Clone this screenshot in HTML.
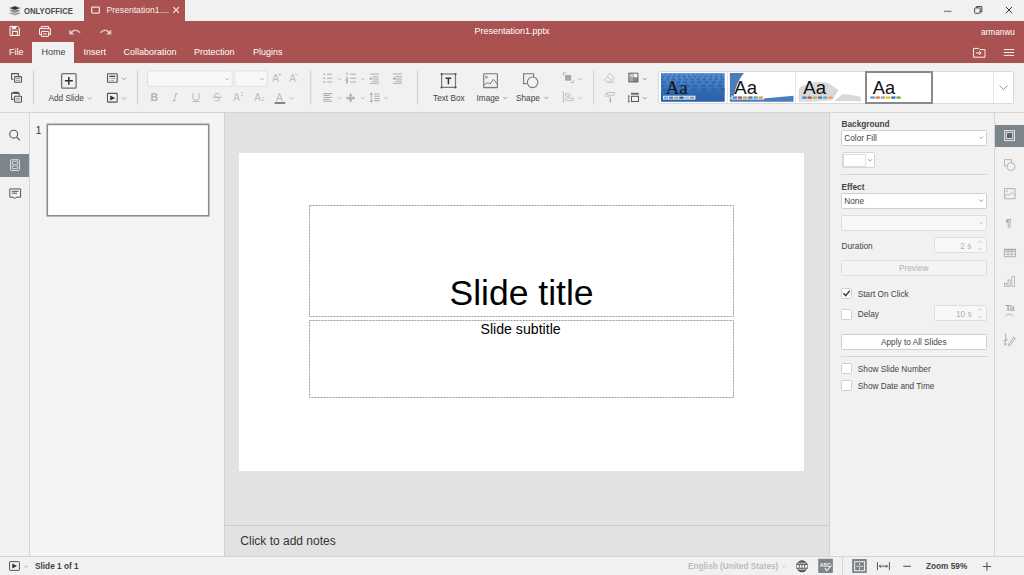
<!DOCTYPE html>
<html><head><meta charset="utf-8">
<style>
*{box-sizing:border-box;margin:0;padding:0}
html,body{width:1024px;height:575px;overflow:hidden;-webkit-font-smoothing:antialiased;background:#f1f1f1;font-family:"Liberation Sans",sans-serif;color:#444}
.a{position:absolute}
.t{position:absolute;white-space:nowrap;line-height:1}
svg{position:absolute;overflow:visible}
</style></head><body>
<!-- title bar -->
<div class="a" style="left:0;top:0;width:1024px;height:21px;background:#f1f1f1"></div>
<div class="a" style="left:84px;top:0;width:101px;height:21px;background:#aa5252"></div>
<div class="t" style="left:23.8px;top:5.5px;font-size:9.4px;font-weight:bold;color:#4a4a4a;transform:scaleX(0.82);transform-origin:0 0">ONLYOFFICE</div>
<div class="t" style="left:106.5px;top:5.5px;font-size:8.6px;color:#fff;opacity:0.92">Presentation1....</div>
<!-- header -->
<div class="a" style="left:0;top:21px;width:1024px;height:42px;background:#aa5252"></div>
<div class="a" style="left:32px;top:42px;width:42px;height:21px;background:#f1f1f1"></div>
<div class="t" style="left:474.5px;top:27px;font-size:9px;color:#fff">Presentation1.pptx</div>
<div class="t" style="left:981px;top:28.5px;font-size:8.25px;color:#fff">armanwu</div>
<div class="t" style="left:9px;top:48px;font-size:9px;color:#fff">File</div>
<div class="t" style="left:41.5px;top:48px;font-size:9px;color:#444">Home</div>
<div class="t" style="left:83.5px;top:48px;font-size:9px;color:#fff">Insert</div>
<div class="t" style="left:123.5px;top:48px;font-size:9px;color:#fff">Collaboration</div>
<div class="t" style="left:194px;top:48px;font-size:9px;color:#fff">Protection</div>
<div class="t" style="left:253px;top:48px;font-size:9px;color:#fff">Plugins</div>
<!-- toolbar -->
<div class="a" style="left:0;top:112px;width:1024px;height:1px;background:#d5d5d5"></div>
<div class="t" style="left:48.5px;top:95px;font-size:8.25px;color:#444">Add Slide</div>
<div class="t" style="left:433px;top:95px;font-size:8.25px;color:#444">Text Box</div>
<div class="t" style="left:476.5px;top:95px;font-size:8.25px;color:#444">Image</div>
<div class="t" style="left:516px;top:95px;font-size:8.25px;color:#444">Shape</div>
<!-- gallery -->
<div class="a" style="left:658.3px;top:70.6px;width:356px;height:33.6px;background:#fff;border:1px solid #dadada;border-radius:1.5px"></div>
<div class="a" style="left:726.5px;top:71.6px;width:1px;height:31.6px;background:#e6e6e6"></div>
<div class="a" style="left:795.3px;top:71.6px;width:1px;height:31.6px;background:#e6e6e6"></div>
<div class="a" style="left:992.5px;top:71.6px;width:1px;height:31.6px;background:#e6e6e6"></div>
<div class="a" style="left:865.1px;top:71.1px;width:68.4px;height:32.5px;border:2px solid #8a8a8a"></div>
<svg width="1024" height="575" style="left:0;top:0" viewBox="0 0 1024 575">
<defs>
<linearGradient id="g1" x1="0" y1="0" x2="0" y2="1">
<stop offset="0" stop-color="#5a90d2"/><stop offset="0.45" stop-color="#4079c0"/><stop offset="0.7" stop-color="#2f68ad"/><stop offset="1" stop-color="#2560a6"/>
</linearGradient>
<pattern id="dots" x="661" y="73" width="5.2" height="4" patternUnits="userSpaceOnUse">
<ellipse cx="2.6" cy="2" rx="1.6" ry="0.9" fill="#2a5c9e" fill-opacity="0.55"/>
</pattern>
</defs>
<rect x="661" y="73.1" width="63.7" height="28.65" fill="url(#g1)"/>
<clipPath id="c1"><rect x="661" y="73.1" width="63.7" height="28.65"/></clipPath><g clip-path="url(#c1)" fill="#2a62ab" fill-opacity="0.75"><ellipse cx="661.0" cy="74.8" rx="1.4" ry="0.6"/><ellipse cx="665.6" cy="74.8" rx="1.4" ry="0.6"/><ellipse cx="670.2" cy="74.8" rx="1.4" ry="0.6"/><ellipse cx="674.8" cy="74.8" rx="1.4" ry="0.6"/><ellipse cx="679.4" cy="74.8" rx="1.4" ry="0.6"/><ellipse cx="684.0" cy="74.8" rx="1.4" ry="0.6"/><ellipse cx="688.6" cy="74.8" rx="1.4" ry="0.6"/><ellipse cx="693.2" cy="74.8" rx="1.4" ry="0.6"/><ellipse cx="697.8" cy="74.8" rx="1.4" ry="0.6"/><ellipse cx="702.4" cy="74.8" rx="1.4" ry="0.6"/><ellipse cx="707.0" cy="74.8" rx="1.4" ry="0.6"/><ellipse cx="711.6" cy="74.8" rx="1.4" ry="0.6"/><ellipse cx="716.2" cy="74.8" rx="1.4" ry="0.6"/><ellipse cx="720.8" cy="74.8" rx="1.4" ry="0.6"/><ellipse cx="663.0" cy="76.9" rx="1.7" ry="0.8"/><ellipse cx="668.3" cy="76.9" rx="1.7" ry="0.8"/><ellipse cx="673.6" cy="76.9" rx="1.7" ry="0.8"/><ellipse cx="678.9" cy="76.9" rx="1.7" ry="0.8"/><ellipse cx="684.2" cy="76.9" rx="1.7" ry="0.8"/><ellipse cx="689.5" cy="76.9" rx="1.7" ry="0.8"/><ellipse cx="694.8" cy="76.9" rx="1.7" ry="0.8"/><ellipse cx="700.1" cy="76.9" rx="1.7" ry="0.8"/><ellipse cx="705.4" cy="76.9" rx="1.7" ry="0.8"/><ellipse cx="710.7" cy="76.9" rx="1.7" ry="0.8"/><ellipse cx="716.0" cy="76.9" rx="1.7" ry="0.8"/><ellipse cx="721.3" cy="76.9" rx="1.7" ry="0.8"/><ellipse cx="661.5" cy="79.4" rx="2.0" ry="0.9"/><ellipse cx="667.6" cy="79.4" rx="2.0" ry="0.9"/><ellipse cx="673.7" cy="79.4" rx="2.0" ry="0.9"/><ellipse cx="679.8" cy="79.4" rx="2.0" ry="0.9"/><ellipse cx="685.9" cy="79.4" rx="2.0" ry="0.9"/><ellipse cx="692.0" cy="79.4" rx="2.0" ry="0.9"/><ellipse cx="698.1" cy="79.4" rx="2.0" ry="0.9"/><ellipse cx="704.2" cy="79.4" rx="2.0" ry="0.9"/><ellipse cx="710.3" cy="79.4" rx="2.0" ry="0.9"/><ellipse cx="716.4" cy="79.4" rx="2.0" ry="0.9"/><ellipse cx="722.5" cy="79.4" rx="2.0" ry="0.9"/><ellipse cx="664.0" cy="82.3" rx="2.4" ry="1.2"/><ellipse cx="671.1" cy="82.3" rx="2.4" ry="1.2"/><ellipse cx="678.2" cy="82.3" rx="2.4" ry="1.2"/><ellipse cx="685.3" cy="82.3" rx="2.4" ry="1.2"/><ellipse cx="692.4" cy="82.3" rx="2.4" ry="1.2"/><ellipse cx="699.5" cy="82.3" rx="2.4" ry="1.2"/><ellipse cx="706.6" cy="82.3" rx="2.4" ry="1.2"/><ellipse cx="713.7" cy="82.3" rx="2.4" ry="1.2"/><ellipse cx="720.8" cy="82.3" rx="2.4" ry="1.2"/><ellipse cx="662.0" cy="85.7" rx="2.8" ry="1.5"/><ellipse cx="670.3" cy="85.7" rx="2.8" ry="1.5"/><ellipse cx="678.6" cy="85.7" rx="2.8" ry="1.5"/><ellipse cx="686.9" cy="85.7" rx="2.8" ry="1.5"/><ellipse cx="695.2" cy="85.7" rx="2.8" ry="1.5"/><ellipse cx="703.5" cy="85.7" rx="2.8" ry="1.5"/><ellipse cx="711.8" cy="85.7" rx="2.8" ry="1.5"/><ellipse cx="720.1" cy="85.7" rx="2.8" ry="1.5"/><ellipse cx="665.5" cy="89.6" rx="3.2" ry="1.7"/><ellipse cx="675.1" cy="89.6" rx="3.2" ry="1.7"/><ellipse cx="684.7" cy="89.6" rx="3.2" ry="1.7"/><ellipse cx="694.3" cy="89.6" rx="3.2" ry="1.7"/><ellipse cx="703.9" cy="89.6" rx="3.2" ry="1.7"/><ellipse cx="713.5" cy="89.6" rx="3.2" ry="1.7"/><ellipse cx="723.1" cy="89.6" rx="3.2" ry="1.7"/></g>
<rect x="663" y="95.7" width="32.4" height="3.9" fill="#e8eef6"/>
<g>
<rect x="663.8" y="96.6" width="4.3" height="2.2" fill="#79a6d8"/>
<rect x="669" y="96.6" width="4.3" height="2.2" fill="#4f86c9"/>
<rect x="674.2" y="96.6" width="4.3" height="2.2" fill="#a8a294"/>
<rect x="679.4" y="96.6" width="4.3" height="2.2" fill="#2a62a6"/>
<rect x="684.6" y="96.6" width="4.3" height="2.2" fill="#8fbce6"/>
<rect x="689.8" y="96.6" width="4.3" height="2.2" fill="#9c9c96"/>
</g>
<text x="665.8" y="93.8" font-family="Liberation Serif" font-size="18.8" fill="#151515">Aa</text>
<!-- theme 2 -->
<path d="M729.9 73.1 H743.8 Q736 83 734 96 L729.9 98 Z" fill="#4a7ebb"/>
<path d="M729.9 101.75 V98.5 H763 L793.5 95.8 V101.75 Z" fill="#4a7ebb"/>
<rect x="731.8" y="95.7" width="32.3" height="3.8" fill="#fff"/>
<rect x="732.6" y="96.4" width="4.4" height="2.4" fill="#4f81bd"/>
<rect x="737.8" y="96.4" width="4.4" height="2.4" fill="#c0504d"/>
<rect x="743" y="96.4" width="4.4" height="2.4" fill="#9bbb59"/>
<rect x="748.2" y="96.4" width="4.4" height="2.4" fill="#8064a2"/>
<rect x="753.4" y="96.4" width="4.4" height="2.4" fill="#4bacc6"/>
<rect x="758.6" y="96.4" width="4.4" height="2.4" fill="#f79646"/>
<text x="734.3" y="94.2" font-family="Liberation Sans" font-size="18.6" fill="#111">Aa</text>
<!-- theme 3 -->
<path d="M798.6 89 Q800 86 812 82.5 Q822 81.5 828 83 L838.5 90 L832 100.5 Q815 102 798.6 101.5 Z" fill="#d9d9d9"/>
<path d="M834 101.3 L842.5 94 Q852 94.5 860.5 96.8 L861 101.3 Z" fill="#d9d9d9"/>
<rect x="801.8" y="96" width="30.5" height="3.3" fill="#fff" fill-opacity="0.6"/>
<rect x="802.2" y="96.4" width="4.4" height="2.4" fill="#4f81bd"/>
<rect x="807.4" y="96.4" width="4.4" height="2.4" fill="#c0504d"/>
<rect x="812.6" y="96.4" width="4.4" height="2.4" fill="#9bbb59"/>
<rect x="817.8" y="96.4" width="4.4" height="2.4" fill="#8064a2"/>
<rect x="823" y="96.4" width="4.4" height="2.4" fill="#4bacc6"/>
<rect x="828.2" y="96.4" width="4.4" height="2.4" fill="#f79646"/>
<text x="803.3" y="94.2" font-family="Liberation Sans" font-size="18.6" fill="#111">Aa</text>
<!-- theme 4 -->
<rect x="870.4" y="96.4" width="4.3" height="2.4" fill="#5b9bd5"/>
<rect x="875.6" y="96.4" width="4.3" height="2.4" fill="#ed7d31"/>
<rect x="880.8" y="96.4" width="4.3" height="2.4" fill="#a5a5a5"/>
<rect x="886" y="96.4" width="4.3" height="2.4" fill="#ffc000"/>
<rect x="891.2" y="96.4" width="4.3" height="2.4" fill="#4472c4"/>
<rect x="896.4" y="96.4" width="4.3" height="2.4" fill="#70ad47"/>
<text x="872.8" y="93.6" font-family="Liberation Sans" font-size="18.2" fill="#111">Aa</text>
<path d="M999.5 85.5 L1003.5 89.6 L1007.5 85.5" fill="none" stroke="#888" stroke-width="0.9"/>
</svg>
<!-- left bar -->
<div class="a" style="left:29px;top:113px;width:1px;height:443px;background:#d5d5d5"></div>
<div class="a" style="left:0;top:153.5px;width:29px;height:23px;background:#7d858c"></div>
<!-- thumbs -->
<div class="a" style="left:30px;top:113px;width:194px;height:443px;background:#f4f4f4"></div>
<div class="a" style="left:224px;top:113px;width:1px;height:443px;background:#d0d0d0"></div>
<div class="t" style="left:35.8px;top:126px;font-size:10px;color:#333">1</div>
<svg width="1024" height="575" style="left:0;top:0" viewBox="0 0 1024 575"><rect x="47.3" y="124.4" width="161.4" height="91.4" fill="#fff" stroke="#8c8c8c" stroke-width="1.6"/></svg>
<!-- canvas -->
<div class="a" style="left:225px;top:113px;width:604px;height:443px;background:#e2e2e2"></div>
<div class="a" style="left:238.5px;top:153px;width:565.5px;height:318px;background:#fff"></div>
<svg width="1024" height="575" style="left:0;top:0" viewBox="0 0 1024 575"><g fill="none" stroke="#9a9a9a" stroke-width="1" stroke-dasharray="2 1">
<rect x="309.5" y="205.5" width="424" height="111"/>
<rect x="309.5" y="320.5" width="424" height="77"/>
</g></svg>
<div class="t" style="left:449.5px;top:276.3px;font-size:35.5px;color:#000">Slide title</div>
<div class="t" style="left:480.5px;top:322px;font-size:14.15px;color:#000">Slide subtitle</div>
<!-- notes -->
<div class="a" style="left:225px;top:525px;width:604px;height:1px;background:#cbcbcb"></div>
<div class="t" style="left:240.3px;top:535px;font-size:12px;color:#333">Click to add notes</div>
<!-- right panel -->
<div class="a" style="left:829px;top:113px;width:1px;height:443px;background:#d0d0d0"></div>
<div class="a" style="left:994px;top:113px;width:1px;height:443px;background:#d5d5d5"></div>
<div class="a" style="left:995px;top:124.5px;width:29px;height:22.5px;background:#7d858c"></div>
<!-- right panel content -->
<div class="t" style="left:841.5px;top:121px;font-size:8.25px;font-weight:bold;color:#444">Background</div>
<div class="a" style="left:841px;top:129.5px;width:146px;height:16px;background:#fff;border:1px solid #cfcfcf;border-radius:1.5px"></div>
<div class="t" style="left:844.3px;top:134.5px;font-size:8.25px;color:#444">Color Fill</div>
<div class="a" style="left:841.6px;top:152.3px;width:33px;height:16.1px;background:#fff;border:1px solid #d5d5d5;border-radius:1.5px"></div>
<div class="a" style="left:843.3px;top:153.8px;width:22.4px;height:12.8px;background:#fff;border:1px solid #dcdcdc"></div>
<div class="a" style="left:841px;top:174px;width:146px;height:1px;background:#d5d5d5"></div>
<div class="t" style="left:841.5px;top:183.5px;font-size:8.25px;font-weight:bold;color:#444">Effect</div>
<div class="a" style="left:841px;top:192.8px;width:146px;height:15.8px;background:#fff;border:1px solid #cfcfcf;border-radius:1.5px"></div>
<div class="t" style="left:844.3px;top:197.5px;font-size:8.25px;color:#444">None</div>
<div class="a" style="left:841px;top:215.3px;width:146px;height:15.8px;background:#f7f7f7;border:1px solid #dedede;border-radius:1.5px"></div>
<div class="t" style="left:841.5px;top:242.5px;font-size:8.25px;color:#444">Duration</div>
<div class="a" style="left:934px;top:237.3px;width:53px;height:16.1px;background:#f7f7f7;border:1px solid #dedede;border-radius:1.5px"></div>
<div class="t" style="left:960.3px;top:242.5px;font-size:8.25px;color:#b0b0b0">2 s</div>
<div class="a" style="left:841px;top:260.4px;width:146px;height:15.2px;background:#f4f4f4;border:1px solid #dedede;border-radius:1.5px"></div>
<div class="t" style="left:899px;top:265px;font-size:8.25px;color:#b0b0b0">Preview</div>
<div class="a" style="left:841px;top:288px;width:11px;height:11px;background:#fff;border:1px solid #d0d0d0;border-radius:1.5px"></div>
<div class="t" style="left:857.8px;top:290.5px;font-size:8.25px;color:#444">Start On Click</div>
<div class="a" style="left:841px;top:308.5px;width:11px;height:11px;background:#fff;border:1px solid #d0d0d0;border-radius:1.5px"></div>
<div class="t" style="left:857.8px;top:310.5px;font-size:8.25px;color:#444">Delay</div>
<div class="a" style="left:934px;top:305.3px;width:53px;height:15.9px;background:#f7f7f7;border:1px solid #dedede;border-radius:1.5px"></div>
<div class="t" style="left:956px;top:310.5px;font-size:8.25px;color:#b0b0b0">10 s</div>
<div class="a" style="left:841px;top:334px;width:146px;height:15.9px;background:#fff;border:1px solid #cfcfcf;border-radius:1.5px"></div>
<div class="t" style="left:881px;top:339px;font-size:8.25px;color:#444">Apply to All Slides</div>
<div class="a" style="left:841px;top:356px;width:146px;height:1px;background:#d5d5d5"></div>
<div class="a" style="left:841px;top:363px;width:11px;height:11px;background:#fff;border:1px solid #d0d0d0;border-radius:1.5px"></div>
<div class="t" style="left:857.8px;top:365.5px;font-size:8.25px;color:#444">Show Slide Number</div>
<div class="a" style="left:841px;top:380px;width:11px;height:11px;background:#fff;border:1px solid #d0d0d0;border-radius:1.5px"></div>
<div class="t" style="left:857.8px;top:382.5px;font-size:8.25px;color:#444">Show Date and Time</div>
<svg width="1024" height="575" style="left:0;top:0" viewBox="0 0 1024 575">
<g fill="none" stroke-width="0.8">
<path d="M979.4 136.6 L981.3 138.5 L983.2 136.6" stroke="#888"/>
<path d="M868.2 159.2 L870.1 161.2 L872 159.2" stroke="#888"/>
<path d="M865.7 153.3 V167.4" stroke="#e6e6e6"/>
<path d="M979.4 199.6 L981.3 201.5 L983.2 199.6" stroke="#888"/>
<path d="M979.4 222 L981.3 224 L983.2 222" stroke="#c0c0c0"/>
<path d="M978.5 242.6 L980.3 240.8 L982.1 242.6 M978.5 248 L980.3 249.8 L982.1 248" stroke="#c0c0c0"/>
<path d="M978.5 310.5 L980.3 308.7 L982.1 310.5 M978.5 316 L980.3 317.8 L982.1 316" stroke="#c0c0c0"/>
<path d="M843.5 293.2 L845.7 295.6 L849.8 290.6" stroke="#333" stroke-width="1.4"/>
</g>
</svg>
<!-- status bar -->
<div class="a" style="left:0;top:556px;width:1024px;height:1px;background:#d5d5d5"></div>
<div class="t" style="left:35px;top:563px;font-size:8.25px;font-weight:bold;color:#444">Slide 1 of 1</div>
<div class="t" style="left:688px;top:563px;font-size:8.25px;font-weight:bold;color:#bdbdbd">English (United States)</div>
<div class="t" style="left:926px;top:563px;font-size:8.25px;font-weight:bold;color:#444">Zoom 59%</div>
<svg id="ic" width="1024" height="575" style="left:0;top:0" viewBox="0 0 1024 575">
<!-- logo -->
<path d="M8.7 13.2 L14.85 10.9 L21 13.2 L14.85 15.6 Z" fill="#a3a5a8"/>
<path d="M8.7 10.7 L14.85 8.4 L21 10.7 L14.85 13.1 Z" fill="#7b7e82" stroke="#f1f1f1" stroke-width="0.6"/>
<path d="M8.7 8.1 L14.85 5.8 L21 8.1 L14.85 10.5 Z" fill="#33383d" stroke="#f1f1f1" stroke-width="0.6"/>
<!-- tab icon -->
<rect x="91.7" y="7.1" width="7.7" height="6" rx="0.8" fill="none" stroke="#fff" stroke-opacity="0.8" stroke-width="1.3"/>
<path d="M173.3 7.1 L179 12.8 M179 7.1 L173.3 12.8" stroke="#fff" stroke-opacity="0.9" stroke-width="1.1"/>
<!-- window controls -->
<path d="M944 11.3 H951.4" stroke="#444" stroke-width="0.8"/>
<rect x="974.6" y="7.9" width="5.6" height="5.4" rx="0.8" fill="none" stroke="#444" stroke-width="1"/>
<path d="M976.4 7.9 V6.6 H981.8 V12 H980.2" fill="none" stroke="#444" stroke-width="1"/>
<path d="M1005.8 6.8 L1012.1 13.3 M1012.1 6.8 L1005.8 13.3" stroke="#333" stroke-width="1"/>
<!-- save -->
<path d="M10 26.4 H17.5 L19.4 28.3 V35.5 H10 Z" fill="none" stroke="#fff" stroke-width="0.95"/>
<rect x="11.9" y="26.6" width="4.2" height="2.2" fill="#fff"/>
<path d="M10.4 29.9 H19" stroke="#fff" stroke-width="0.7" stroke-opacity="0.6"/>
<rect x="12.4" y="31.4" width="4.9" height="4" fill="none" stroke="#fff" stroke-width="0.9"/>
<!-- print -->
<path d="M41.3 28.5 V26.6 H48.6 V28.5" fill="none" stroke="#fff" stroke-width="0.95"/>
<path d="M41 34.6 H39.5 V28.6 H50.4 V34.6 H48.9" fill="none" stroke="#fff" stroke-width="0.95"/>
<rect x="41.4" y="31.4" width="7.2" height="5" rx="0.5" fill="none" stroke="#fff" stroke-width="0.95"/>
<rect x="43" y="33.1" width="4" height="1.7" fill="#fff" fill-opacity="0.5"/>
<!-- undo/redo -->
<g fill="none" stroke="#fff" stroke-opacity="0.65" stroke-width="1.5">
<path d="M71.2 32.6 Q75.5 28 80.1 32.8"/>
<path d="M109.3 32.6 Q105 28 100.4 32.8"/>
</g>
<path d="M69.2 29.5 L69.2 34.6 L74.4 34.6 Z" fill="#fff" fill-opacity="0.65"/>
<path d="M111.3 29.5 L111.3 34.6 L106.1 34.6 Z" fill="#fff" fill-opacity="0.65"/>
<!-- folder -->
<path d="M973.5 48.4 H978.6 L979.8 49.6 H985 V57.2 H973.5 Z" fill="none" stroke="#fff" stroke-width="1" stroke-opacity="0.9"/>
<path d="M976 53 H980.8" stroke="#fff" stroke-width="1"/>
<path d="M979.3 51.3 L981.1 53 L979.3 54.7" fill="none" stroke="#fff" stroke-width="1"/>
<!-- hamburger -->
<path d="M1003.8 49.6 H1014.2 M1003.8 52.5 H1014.2 M1003.8 55.4 H1014.2" stroke="#fff" stroke-width="0.9"/>
</svg>
<svg id="tb" width="1024" height="575" style="left:0;top:0" viewBox="0 0 1024 575">
<g fill="none" stroke-linejoin="round">
<!-- copy -->
<path d="M13.4 79.3 H11.6 V73.6 H18.5 V76.3" stroke="#555" stroke-width="1.1"/>
<rect x="14.6" y="76.6" width="6.9" height="5.7" rx="0.6" stroke="#555" stroke-width="1.1"/>
<path d="M16 78.5 H20 M16 80.3 H20" stroke="#999" stroke-width="1"/>
<!-- paste -->
<path d="M13.6 99.4 H11.6 V92.9 H19.1 V95.4" stroke="#555" stroke-width="1.1"/>
<rect x="13.3" y="91.8" width="4.9" height="1.9" fill="#444" stroke="none"/>
<rect x="14.6" y="96.2" width="6.9" height="6" rx="0.6" stroke="#555" stroke-width="1.1"/>
<path d="M16 98.3 H20 M16 100.1 H20" stroke="#999" stroke-width="1"/>
<!-- add slide -->
<rect x="61.6" y="73.6" width="14.5" height="14.5" rx="1.2" stroke="#707070" stroke-width="1.3"/>
<path d="M64.9 80.8 H72.8 M68.85 76.9 V84.8" stroke="#333" stroke-width="1.5"/>
<!-- layout -->
<rect x="107.5" y="73.7" width="9.7" height="8.6" rx="0.6" stroke="#555" stroke-width="1.1"/>
<path d="M109.4 76.3 H115.2" stroke="#333" stroke-width="1.2"/>
<path d="M109.4 78.5 H110.2 M111.2 78.5 H115.2 M109.4 80.4 H110.2 M111.2 80.4 H114" stroke="#999" stroke-width="0.9"/>
<!-- play -->
<rect x="107.5" y="93.4" width="9.7" height="8.7" rx="0.6" stroke="#555" stroke-width="1.1"/>
<path d="M110.2 95.4 L115.2 97.9 L110.2 100.4 Z" fill="#333" stroke="none"/>
<!-- separators -->
<path d="M33.5 70.5 V104.5 M137.5 70.5 V104.5 M310.8 70.5 V104.5 M417.5 70.5 V104.5 M593.6 70.5 V104.5" stroke="#d0d0d0" stroke-width="1"/>
<!-- chevrons -->
<g stroke="#9a9a9a" stroke-width="0.8">
<path d="M87.5 97.3 L89.6 99.5 L91.7 97.3"/>
<path d="M121.8 77.6 L123.9 79.8 L126 77.6"/>
<path d="M121.8 97.2 L123.9 99.4 L126 97.2"/>
</g>
<g stroke="#b5b5b5" stroke-width="0.8">
<path d="M225.1 78 L227 80 L228.9 78"/>
<path d="M260.3 78 L262.2 80 L264.1 78"/>
<path d="M289.5 97.3 L291.5 99.3 L293.5 97.3"/>
<path d="M337.6 78 L339.5 80 L341.4 78"/>
<path d="M360.9 78 L362.8 80 L364.7 78"/>
<path d="M337.6 97.1 L339.5 99.1 L341.4 97.1"/>
<path d="M360.9 97.1 L362.8 99.1 L364.7 97.1"/>
<path d="M384.3 97.1 L386.2 99.1 L388.1 97.1"/>
<path d="M578 78 L579.9 80 L581.8 78"/>
<path d="M578 97.1 L579.9 99.1 L581.8 97.1"/>
</g>
<g stroke="#888" stroke-width="0.8">
<path d="M503.3 96.8 L505.2 98.8 L507.1 96.8"/>
<path d="M544.4 96.8 L546.3 98.8 L548.2 96.8"/>
<path d="M642.8 78 L644.8 80 L646.8 78"/>
<path d="M642.8 97.1 L644.8 99.1 L646.8 97.1"/>
</g>
</g>
<!-- font combos -->
<rect x="147.5" y="70.9" width="84.6" height="15.4" rx="1" fill="#f8f8f8" stroke="#e0e0e0" stroke-width="1"/>
<rect x="234.9" y="70.9" width="32.4" height="15.4" rx="1" fill="#f8f8f8" stroke="#e0e0e0" stroke-width="1"/>
<g fill="none" stroke="#b5b5b5" stroke-width="0.8">
<path d="M225.1 78 L227 80 L228.9 78"/>
<path d="M260.3 78 L262.2 80 L264.1 78"/>
</g>
<!-- B I U S -->
<g fill="#b3b3b3">
<text x="150.6" y="101" font-family="Liberation Sans" font-weight="bold" font-size="10.5">B</text>
</g>
<g fill="none" stroke="#b3b3b3" stroke-width="0.9">
<path d="M174.6 93.8 H177.6 M172.6 100.7 H175.6 M176.1 93.8 L174.1 100.7"/>
<path d="M192.8 93.3 V98.2 Q192.8 100.2 195.9 100.2 Q199 100.2 199 98.2 V93.3 M192.3 101.6 H199.6"/>
<path d="M212.4 97.3 H221.7"/>
<path d="M219.6 94.6 Q218.8 93.5 217 93.5 Q214.6 93.5 214.6 95.3 Q214.6 96.6 217 97.2 Q219.6 97.8 219.6 99.2 Q219.6 100.9 217 100.9 Q215 100.9 214.3 99.8"/>
</g>
<!-- A icons -->
<g fill="#bcbcbc" font-family="Liberation Sans" font-size="10">
<text x="272.2" y="81.8">A</text>
<text x="289.3" y="81.8">A</text>
<text x="233.2" y="101">A</text>
<text x="254.3" y="101">A</text>
<text x="276.1" y="100.8">A</text>
</g>
<g fill="none" stroke="#b8b8b8" stroke-width="0.8">
<path d="M278.8 74.6 H281 M279.9 73.5 V75.7"/>
<path d="M295.2 74.6 H297.4"/>
</g>
<g fill="#b8b8b8" font-family="Liberation Sans" font-size="4.5">
<text x="240.6" y="96">2</text>
<text x="261.6" y="101.2">2</text>
</g>
<rect x="274.6" y="102.1" width="10.6" height="1.8" fill="#777"/>
<!-- paragraph -->
<g fill="#adadad">
<circle cx="324.2" cy="74.3" r="0.9"/><circle cx="324.2" cy="78.3" r="0.9"/><circle cx="324.2" cy="81.9" r="0.9"/>
</g>
<g fill="none" stroke="#adadad" stroke-width="1.05">
<path d="M326.8 74.3 H332.2 M326.8 78.3 H332.2 M326.8 81.9 H332.2"/>
<path d="M349.8 74.3 H355.8 M349.8 78.3 H355.8 M349.8 81.9 H355.8"/>
<path d="M347 72.2 V75.2 M346 77.3 Q347.6 77 347.3 78.3 L346 79.6 H347.8 M346 80.8 H347.6 L346.8 81.9 Q348 82.2 346 83.2"/>
<path d="M369.8 73.9 H378.8 M372.6 76.7 H378.8 M372.6 79 H378.8 M372.6 81.2 H378.8 M369.8 83.3 H378.8 M372 78.6 H370 M371.3 77.3 L370 78.6 L371.3 79.9"/>
<path d="M392.9 73.9 H401.9 M395.7 76.7 H401.9 M395.7 79 H401.9 M395.7 81.2 H401.9 M392.9 83.3 H401.9 M392.9 78.6 H395.2 M393.9 77.3 L395.2 78.6 L393.9 79.9"/>
<path d="M323.4 93.6 H332.2 M323.4 95.5 H329.8 M323.4 97.5 H332.2 M323.4 99.4 H329.8 M323.4 101.3 H332.2"/>
<path d="M346.3 97.2 H354.9 M346.3 98.6 H354.9 M350.6 93 V96.3 M349.3 94.8 L350.6 96.2 L351.9 94.8 M350.6 102.4 V99.5 M349.3 100.9 L350.6 99.5 L351.9 100.9"/>
<path d="M371.3 93.3 V102 M370 94.6 L371.3 93.3 L372.6 94.6 M370 100.7 L371.3 102 L372.6 100.7 M374.2 93.9 H379.6 M374.2 96.2 H379.6 M374.2 98.4 H379.6 M374.2 100.6 H379.6"/>
</g>
<!-- text box -->
<rect x="441.6" y="74" width="13.9" height="13.4" fill="none" stroke="#777" stroke-width="1.2"/>
<g fill="#555"><circle cx="441.6" cy="74" r="1.1"/><circle cx="455.5" cy="74" r="1.1"/><circle cx="441.6" cy="87.4" r="1.1"/><circle cx="455.5" cy="87.4" r="1.1"/></g>
<path d="M445.6 78.2 H451.2 M448.4 78.2 V84.3" stroke="#333" stroke-width="1.5" fill="none"/>
<!-- image -->
<rect x="483.7" y="73.7" width="13.7" height="14" rx="0.5" fill="none" stroke="#777" stroke-width="1.1"/>
<circle cx="486.4" cy="77.2" r="1" fill="none" stroke="#777" stroke-width="0.8"/>
<path d="M483.7 85.2 L487.8 82.6 L490 84 L493.3 79.3 L497.4 84" fill="none" stroke="#777" stroke-width="1"/>
<path d="M483.7 87.4 H497.4" stroke="#777" stroke-width="1"/>
<!-- shape -->
<path d="M526.4 83.6 H523.6 V73.7 H533.6 V76.9" fill="none" stroke="#777" stroke-width="1.1"/>
<circle cx="532.6" cy="82.3" r="5.3" fill="#f1f1f1" stroke="#777" stroke-width="1.1"/>
<!-- arrange -->
<rect x="565" y="75" width="6.2" height="5.7" fill="#a8a8a8"/>
<path d="M563.3 75.8 V72.9 H566.2 M573.3 79.8 V82.7 H570.4" fill="none" stroke="#b3b3b3" stroke-width="0.9"/>
<!-- align -->
<path d="M563.4 91.7 V102.7" stroke="#b3b3b3" stroke-width="0.9"/>
<rect x="565.6" y="93.6" width="4.2" height="2.6" rx="0.4" fill="none" stroke="#b8b8b8" stroke-width="0.8"/>
<rect x="565.6" y="98.1" width="8" height="2.6" rx="0.4" fill="none" stroke="#b8b8b8" stroke-width="0.8"/>
<!-- eraser -->
<path d="M609.8 73.4 L614.5 78.1 L609.3 82.2 H607 L605.1 80.3 Q604.6 79.6 605.2 79 Z M607 75.9 L611.6 80.5 M608.5 82.2 H614.8" fill="none" stroke="#c0c0c0" stroke-width="0.9"/>
<!-- format painter -->
<rect x="607.4" y="92.4" width="7.2" height="2.8" rx="0.6" fill="none" stroke="#b8b8b8" stroke-width="0.9"/>
<path d="M607.4 93.4 H605.4 V96.6 H610.4 V97.8" fill="none" stroke="#c8c8c8" stroke-width="0.8"/>
<rect x="609.6" y="97.6" width="1.5" height="5" fill="#b0b0b0"/>
<!-- color scheme -->
<rect x="628.4" y="72.7" width="10" height="9.7" fill="#555"/>
<rect x="629.3" y="73.6" width="4.1" height="4" fill="#c8c8c8"/>
<rect x="633.4" y="73.6" width="4.1" height="4" fill="#f4f4f4"/>
<rect x="629.3" y="77.6" width="4.1" height="3.9" fill="#a8a8a8"/>
<rect x="633.4" y="77.6" width="4.1" height="3.9" fill="#8a8a8a"/>
<!-- slide size -->
<rect x="631" y="92.8" width="7.8" height="1.8" fill="#666"/>
<rect x="631.5" y="96.3" width="7" height="5.2" fill="none" stroke="#555" stroke-width="1"/>
<path d="M628.8 96 V101.8 M627.9 96 H629.7 M627.9 101.8 H629.7" fill="none" stroke="#555" stroke-width="0.9"/>
</svg>
<svg width="1024" height="575" style="left:0;top:0" viewBox="0 0 1024 575">
<g fill="none">
<!-- search -->
<circle cx="13.7" cy="134.2" r="3.9" stroke="#555" stroke-width="1.1"/>
<path d="M16.6 137.1 L19.8 140.3" stroke="#555" stroke-width="1.2"/>
<!-- slides (active) -->
<rect x="10.6" y="159.8" width="8.8" height="10.6" rx="0.8" stroke="#e6e6e6" stroke-width="1"/>
<rect x="12.6" y="161.7" width="4.8" height="2.4" fill="#5d646a" stroke="#e6e6e6" stroke-width="0.9"/>
<rect x="12.6" y="165.9" width="4.8" height="2.4" fill="#5d646a" stroke="#e6e6e6" stroke-width="0.9"/>
<!-- comments -->
<path d="M9.8 188.9 H20.6 V197.2 H16 L14.6 198.8 L13.2 197.2 H9.8 Z" stroke="#555" stroke-width="1"/>
<path d="M11.9 191.3 H18.6 M11.9 193.2 H17" stroke="#555" stroke-width="1"/>
<!-- right bar: slide settings active -->
<rect x="1004.6" y="130.6" width="9.9" height="10" stroke="#e8e8e8" stroke-width="1"/>
<rect x="1006.4" y="132.6" width="6.3" height="5.9" fill="#5d646a" stroke="#e8e8e8" stroke-width="0.9"/>
<!-- shape -->
<path d="M1006.9 166 H1004.5 V159.6 H1011.3 V162.4" stroke="#adadad" stroke-width="0.9"/>
<circle cx="1011" cy="166.6" r="4" fill="#f1f1f1" stroke="#adadad" stroke-width="0.9"/>
<!-- image -->
<rect x="1004.6" y="188.6" width="10.4" height="10.2" stroke="#adadad" stroke-width="0.9"/>
<circle cx="1006.8" cy="191" r="0.7" stroke="#adadad" stroke-width="0.7"/>
<path d="M1004.6 196.5 L1007.6 194.3 L1009.3 195.4 L1011.8 192.4 L1015 195.4" stroke="#adadad" stroke-width="0.9"/>
<!-- table -->
<rect x="1004.3" y="249.3" width="11.3" height="7.4" stroke="#adadad" stroke-width="0.9"/>
<path d="M1004.3 251.6 H1015.6 M1004.3 254.1 H1015.6 M1008 249.3 V256.7 M1011.8 249.3 V256.7" stroke="#adadad" stroke-width="0.8"/>
<path d="M1004.3 249.6 H1015.6" stroke="#a5a5a5" stroke-width="1.4"/>
<!-- chart -->
<rect x="1004.6" y="283.5" width="2.2" height="2.8" stroke="#adadad" stroke-width="0.8"/>
<rect x="1008" y="280" width="2.2" height="6.3" stroke="#adadad" stroke-width="0.8"/>
<rect x="1011.9" y="276.6" width="2.5" height="9.7" stroke="#adadad" stroke-width="0.8"/>
<!-- Ta arc -->
<path d="M1005.5 316 Q1009.3 312.3 1013.1 316" stroke="#adadad" stroke-width="0.9"/>
<!-- signature -->
<path d="M1005.2 333.6 Q1006.3 336 1005.6 338.5 Q1004.8 342 1005.2 345.5 M1003.4 341.2 Q1005.5 339.5 1008.3 339.8 M1004.2 344 Q1005.8 345.8 1007 343.5" stroke="#adadad" stroke-width="1"/><path d="M1008.6 345.8 L1009.2 343.4 L1013.8 337.2 L1015.3 338.4 L1010.7 344.6 Z" stroke="#adadad" stroke-width="1"/>
<!-- status: play -->
<rect x="9.6" y="561.6" width="9.8" height="8.8" rx="0.6" stroke="#555" stroke-width="1"/>
<path d="M12.3 563.6 L17 566 L12.3 568.4 Z" fill="#333" stroke="none"/>
<path d="M24 565.6 L25.9 567.5 L27.8 565.6" stroke="#999" stroke-width="0.8"/>
<!-- lang arrow -->
<path d="M782.8 567.4 L784.7 565.5 L786.6 567.4" stroke="#bbb" stroke-width="0.8"/>
<!-- globe -->
<circle cx="802" cy="566.3" r="5.5" fill="#666" stroke="#444" stroke-width="1"/>
<path d="M797.8 563.3 H806.2 M797.2 569.3 H806.8" stroke="#e8e8e8" stroke-width="0.7"/>
<rect x="796.6" y="565" width="10.8" height="2.7" fill="#f4f4f4" stroke="none"/>
<path d="M799.3 565 V567.7 M802 565 V567.7 M804.7 565 V567.7" stroke="#555" stroke-width="0.9"/>
<!-- separators -->
<path d="M842.5 557 V575" stroke="#d5d5d5" stroke-width="1"/>
<!-- fit width -->
<path d="M877.4 562.2 V570.2 M889.4 562.2 V570.2 M879.3 566.2 H887.5 M880.8 564.7 L879.3 566.2 L880.8 567.7 M886 564.7 L887.5 566.2 L886 567.7" stroke="#555" stroke-width="1"/>
<!-- minus plus -->
<path d="M903.3 566.3 H910.9" stroke="#555" stroke-width="1.1"/>
<path d="M982.7 566.5 H991.2 M986.95 562.3 V570.7" stroke="#555" stroke-width="1.1"/>
</g>
<!-- spell btn -->
<rect x="818.2" y="558.8" width="14.7" height="14.3" rx="0.8" fill="#7d858c"/>
<text x="819.8" y="566.9" font-family="Liberation Sans" font-weight="bold" font-size="6.2" fill="#f0f0f0" textLength="11.3" lengthAdjust="spacingAndGlyphs">ABC</text>
<path d="M824.9 568.1 L826.6 570.6 L831.5 565.4" fill="none" stroke="#f0f0f0" stroke-width="1.1"/>
<!-- fit slide btn -->
<rect x="852.1" y="558.9" width="14.7" height="14.2" rx="0.8" fill="#7d858c"/>
<rect x="854.6" y="561.6" width="9.9" height="9.1" fill="none" stroke="#e6e6e6" stroke-width="1.1"/>
<g stroke="#f0f0f0" stroke-width="0.9" fill="none">
<path d="M856.3 566.3 H862.8 M859.55 563 V569.6"/>
<path d="M857.6 563.8 L859.4 566.1 L861.5 563.8 M857.6 568.8 L859.4 566.5 L861.5 568.8" stroke="#5d646a" stroke-width="0.6"/>
</g>
</svg>
<div class="t" style="left:1005.2px;top:303.5px;font-size:9.2px;color:#a8a8a8;letter-spacing:-0.6px;font-weight:bold">Ta</div>
<div class="t" style="left:1005.5px;top:217.5px;font-size:11px;color:#adadad;font-weight:bold">&#182;</div>
</body></html>
